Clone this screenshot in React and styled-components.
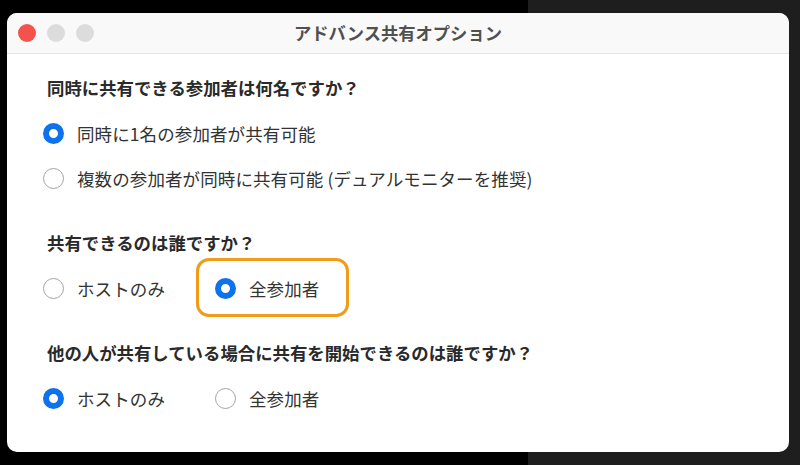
import React from "react";
import styled, { createGlobalStyle, css } from "styled-components";

const Global = createGlobalStyle`
  html, body { margin: 0; padding: 0; }
  body {
    width: 800px;
    height: 465px;
    overflow: hidden;
    background: linear-gradient(to right, #000 0 528px, #1e1e1e 528px 800px);
    font-family: "Noto Sans CJK JP", "Noto Sans", sans-serif;
  }
`;

const Page = styled.div`
  padding: 13px 0 0 7px;
  height: 465px;
  box-sizing: border-box;
`;

const Window = styled.div`
  width: 782px;
  height: 439px;
  background: #fff;
  border-radius: 10px;
  overflow: hidden;
  display: flex;
  flex-direction: column;
`;

const TitleBar = styled.div`
  height: 40px;
  flex: none;
  background: #f9f9f9;
  border-bottom: 1px solid #e3e3e3;
  display: grid;
  grid-template-columns: 1fr auto 1fr;
  align-items: center;
`;

const Lights = styled.div`
  display: flex;
  gap: 11px;
  padding-left: 11px;
`;

const Light = styled.span`
  width: 18px;
  height: 18px;
  border-radius: 50%;
  background: ${(p) => (p.$red ? "#f4524d" : "#dcdcdc")};
`;

const Title = styled.div`
  font-size: 17.3px;
  font-weight: 700;
  color: #505050;
  line-height: 24px;
  margin-top: -1px;
`;

const Content = styled.div`
  padding: 22px 0 0 37px;
  display: flex;
  flex-direction: column;
  gap: 30px;
`;

const Section = styled.div`
  display: flex;
  flex-direction: column;
`;

const Heading = styled.div`
  font-size: 17.4px;
  font-weight: 700;
  color: #2a2a2a;
  line-height: 24px;
  padding-left: 3px;
  margin-bottom: 11px;
`;

const Row = styled.div`
  display: flex;
  height: 45px;
  align-items: center;
`;

const Option = styled.div`
  position: relative;
  display: flex;
  align-items: center;
  gap: 13px;
  height: 45px;
  min-width: ${(p) => (p.$first ? "172px" : "auto")};
  font-size: 17.5px;
  color: #333;
  ${(p) =>
    p.$highlight &&
    css`
      &::after {
        content: "";
        position: absolute;
        top: -8px;
        bottom: -6px;
        left: -20px;
        right: -30px;
        border: 3px solid #f39a17;
        border-radius: 13px;
      }
    `}
`;

const Radio = styled.span`
  width: 21px;
  height: 21px;
  box-sizing: border-box;
  border-radius: 50%;
  flex: none;
  margin-left: -1px;
  ${(p) =>
    p.$checked
      ? css`
          border: 6px solid #0e72ed;
          background: #fff;
        `
      : css`
          border: 1.5px solid #a3a3a3;
          background: #fff;
        `}
`;

const Label = styled.span`
  line-height: 24px;
  letter-spacing: 0.1px;
`;

function Opt({ checked, label, first, highlight }) {
  return (
    <Option $first={first} $highlight={highlight}>
      <Radio $checked={checked} />
      <Label>{label}</Label>
    </Option>
  );
}

export default function App() {
  return (
    <>
      <Global />
      <Page>
        <Window>
          <TitleBar>
            <Lights>
              <Light $red />
              <Light />
              <Light />
            </Lights>
            <Title>アドバンス共有オプション</Title>
            <div />
          </TitleBar>
          <Content>
            <Section>
              <Heading>同時に共有できる参加者は何名ですか？</Heading>
              <Row>
                <Opt checked label="同時に1名の参加者が共有可能" />
              </Row>
              <Row>
                <Opt label="複数の参加者が同時に共有可能 (デュアルモニターを推奨)" />
              </Row>
            </Section>
            <Section>
              <Heading>共有できるのは誰ですか？</Heading>
              <Row>
                <Opt first label="ホストのみ" />
                <Opt checked highlight label="全参加者" />
              </Row>
            </Section>
            <Section>
              <Heading>他の人が共有している場合に共有を開始できるのは誰ですか？</Heading>
              <Row>
                <Opt first checked label="ホストのみ" />
                <Opt label="全参加者" />
              </Row>
            </Section>
          </Content>
        </Window>
      </Page>
    </>
  );
}
